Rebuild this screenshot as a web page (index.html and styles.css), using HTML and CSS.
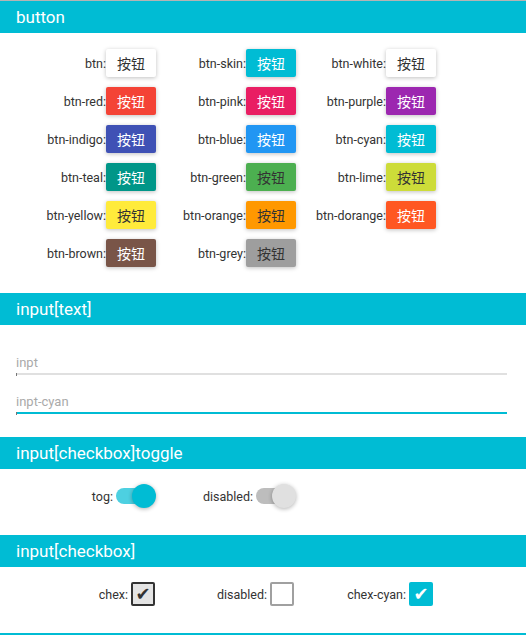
FILE: index.html
```html
<!DOCTYPE html>
<html lang="zh-CN">
<head>
<meta charset="utf-8">
<title>UI</title>
<link rel="stylesheet" href="styles.css">
</head>
<body>
<section class="sec">
  <h2 class="hd">button</h2>
  <div class="bd bd-btn">
    <div class="grid grid-btn">
      <div class="item"><span class="lbl">btn:</span><button class="btn btn-white">按钮</button></div>
      <div class="item"><span class="lbl">btn-skin:</span><button class="btn btn-skin">按钮</button></div>
      <div class="item"><span class="lbl">btn-white:</span><button class="btn btn-white">按钮</button></div>
      <div class="item"><span class="lbl">btn-red:</span><button class="btn btn-red">按钮</button></div>
      <div class="item"><span class="lbl">btn-pink:</span><button class="btn btn-pink">按钮</button></div>
      <div class="item"><span class="lbl">btn-purple:</span><button class="btn btn-purple">按钮</button></div>
      <div class="item"><span class="lbl">btn-indigo:</span><button class="btn btn-indigo">按钮</button></div>
      <div class="item"><span class="lbl">btn-blue:</span><button class="btn btn-blue">按钮</button></div>
      <div class="item"><span class="lbl">btn-cyan:</span><button class="btn btn-cyan">按钮</button></div>
      <div class="item"><span class="lbl">btn-teal:</span><button class="btn btn-teal">按钮</button></div>
      <div class="item"><span class="lbl">btn-green:</span><button class="btn btn-green">按钮</button></div>
      <div class="item"><span class="lbl">btn-lime:</span><button class="btn btn-lime">按钮</button></div>
      <div class="item"><span class="lbl">btn-yellow:</span><button class="btn btn-yellow">按钮</button></div>
      <div class="item"><span class="lbl">btn-orange:</span><button class="btn btn-orange">按钮</button></div>
      <div class="item"><span class="lbl">btn-dorange:</span><button class="btn btn-dorange">按钮</button></div>
      <div class="item"><span class="lbl">btn-brown:</span><button class="btn btn-brown">按钮</button></div>
      <div class="item"><span class="lbl">btn-grey:</span><button class="btn btn-grey">按钮</button></div>
    </div>
  </div>
</section>

<section class="sec">
  <h2 class="hd">input[text]</h2>
  <div class="bd bd-input">
    <div class="field"><input type="text" placeholder="inpt"></div>
    <div class="field field-cyan"><input type="text" placeholder="inpt-cyan"></div>
  </div>
</section>

<section class="sec">
  <h2 class="hd">input[checkbox]toggle</h2>
  <div class="bd bd-ctl">
    <div class="grid grid-tog">
      <div class="item"><span class="lbl lbl-gap">tog:</span><span class="tog tog-on"><span class="track"></span><span class="knob"></span></span></div>
      <div class="item"><span class="lbl lbl-gap">disabled:</span><span class="tog tog-dis"><span class="track"></span><span class="knob"></span></span></div>
    </div>
  </div>
</section>

<section class="sec">
  <h2 class="hd">input[checkbox]</h2>
  <div class="bd bd-ctl">
    <div class="grid grid-chk">
      <div class="item"><span class="lbl lbl-gap">chex:</span><span class="chk chk-on">✔</span></div>
      <div class="item"><span class="lbl lbl-gap">disabled:</span><span class="chk chk-dis"></span></div>
      <div class="item"><span class="lbl lbl-gap">chex-cyan:</span><span class="chk chk-cyan">✔</span></div>
    </div>
  </div>
</section>

<div class="hd-next"></div>
</body>
</html>
```

FILE: styles.css
```css
html, body {
  margin: 0;
  padding: 0;
  background: #fff;
}
body {
  border-top: 1px solid #b4b4b4;
  font-family: Roboto, "Noto Sans CJK SC", sans-serif;
  color: #333;
}
.hd {
  margin: 0;
  height: 32px;
  line-height: 32px;
  padding: 0 16px;
  background: #00bcd4;
  color: #fff;
  font-size: 17px;
  font-weight: 400;
}
.hd-next {
  height: 32px;
  background: #00bcd4;
}
.bd {
  padding: 16px 16px 26px;
}
.bd-input {
  padding: 16px 19px 23px 16px;
}
.bd-ctl {
  padding: 15px 16px 27px;
}
.grid {
  display: grid;
}
.grid-btn {
  grid-template-columns: repeat(3, 140px);
  row-gap: 10px;
}
.grid-tog {
  grid-template-columns: repeat(2, 140px);
}
.grid-chk {
  grid-template-columns: repeat(3, 139px);
}
.item {
  display: flex;
  justify-content: flex-end;
  align-items: center;
}
.lbl {
  font-size: 12.5px;
  color: #333;
  white-space: nowrap;
}
.lbl-gap {
  margin-right: 3px;
}
.btn {
  width: 50px;
  height: 28px;
  border: 0;
  border-radius: 2px;
  padding: 0;
  font-family: "Noto Sans CJK SC", sans-serif;
  font-size: 14px;
  line-height: 28px;
  color: #fff;
  box-shadow: 0 1px 4px rgba(0, 0, 0, 0.25);
  flex: none;
}
.btn-white { background: #fff; color: #333; }
.btn-skin { background: #00bcd4; }
.btn-red { background: #f44336; }
.btn-pink { background: #e91e63; }
.btn-purple { background: #9c27b0; }
.btn-indigo { background: #3f51b5; }
.btn-blue { background: #2196f3; }
.btn-cyan { background: #00bcd4; }
.btn-teal { background: #009688; }
.btn-green { background: #4caf50; color: #333; }
.btn-lime { background: #cddc39; color: #333; }
.btn-yellow { background: #ffeb3b; color: #333; }
.btn-orange { background: #ff9800; color: #333; }
.btn-dorange { background: #ff5722; }
.btn-brown { background: #795548; }
.btn-grey { background: #9e9e9e; color: #333; }

.field {
  position: relative;
}
.field + .field {
  margin-top: 5px;
}
.field input {
  display: block;
  width: 100%;
  height: 34px;
  box-sizing: border-box;
  margin: 0;
  border: 0;
  border-bottom: 2px solid #e0e0e0;
  padding: 10px 0 0;
  font-family: Roboto, sans-serif;
  font-size: 13px;
  color: #333;
  background: transparent;
  outline: none;
}
.field input::placeholder {
  color: #aaa;
}
.field-cyan input {
  border-bottom-color: #00bcd4;
}
.field::after {
  content: "";
  position: absolute;
  left: 0;
  bottom: -1px;
  width: 1px;
  height: 3px;
  background: #777;
}

.tog {
  position: relative;
  width: 40px;
  height: 24px;
  flex: none;
}
.track {
  position: absolute;
  left: 0;
  top: 4px;
  width: 36px;
  height: 16px;
  border-radius: 8px;
}
.knob {
  position: absolute;
  left: 16px;
  top: 0;
  width: 24px;
  height: 24px;
  border-radius: 50%;
  box-shadow: 0 1px 4px rgba(0, 0, 0, 0.3);
}
.tog-on .track { background: #4dd0e1; }
.tog-on .knob { background: #00bcd4; }
.tog-dis .track { background: #bdbdbd; }
.tog-dis .knob { background: #e0e0e0; }

.chk {
  width: 24px;
  height: 24px;
  box-sizing: border-box;
  border-radius: 2px;
  display: flex;
  align-items: center;
  justify-content: center;
  font-family: "DejaVu Sans", sans-serif;
  font-size: 18px;
  line-height: 1;
  flex: none;
}
.chk-on {
  border: 2px solid #333;
  background: #e4e4e4;
  color: #333;
}
.chk-dis {
  border: 2px solid #a0a0a0;
  background: #fff;
}
.chk-cyan {
  background: #00bcd4;
  color: #fff;
}
```
